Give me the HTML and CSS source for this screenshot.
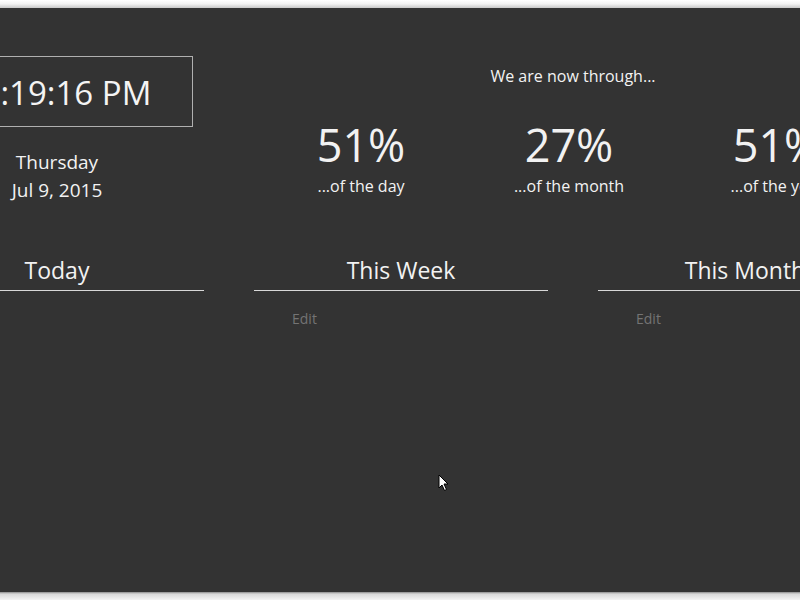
FILE: index.html
```html
<!DOCTYPE html>
<html>
<head>
<meta charset="utf-8">
<link rel="stylesheet" href="styles.css">
</head>
<body>
<div class="frame-top"></div>
<main class="app">
  <div class="content">
    <section class="top-row">
      <div class="clock-col">
        <div class="clock-box"><span class="clock-time">12:19:16 PM</span></div>
        <div class="day">Thursday</div>
        <div class="date">Jul 9, 2015</div>
      </div>
      <div class="progress">
        <div class="progress-title">We are now through...</div>
        <div class="stats">
          <div class="stat"><div class="pct">51%</div><div class="label">...of the day</div></div>
          <div class="stat"><div class="pct">27%</div><div class="label">...of the month</div></div>
          <div class="stat"><div class="pct">51%</div><div class="label">...of the year</div></div>
        </div>
      </div>
    </section>
    <section class="lists">
      <div class="list">
        <h2 class="list-title">Today</h2>
      </div>
      <div class="list">
        <h2 class="list-title">This Week</h2>
        <div class="edit">Edit</div>
      </div>
      <div class="list">
        <h2 class="list-title">This Month</h2>
        <div class="edit">Edit</div>
      </div>
    </section>
  </div>
  <svg class="cursor" width="12" height="18" viewBox="0 0 12 18"><path d="M1 1 L1 14 L4 11 L6.5 16.5 L8.5 15.5 L6 10 L10 10 Z" fill="#fff" stroke="#000" stroke-width="1"/></svg>
</main>
<div class="frame-bottom"></div>
</body>
</html>
```
FILE: styles.css
```css
html, body {
  margin: 0;
  padding: 0;
  width: 800px;
  height: 600px;
  overflow: hidden;
  background: #333333;
  font-family: "Open Sans", "Noto Sans", sans-serif;
  color: #f2f2f2;
}
.frame-top {
  height: 8px;
  background: linear-gradient(#ffffff, #f2f2f2 50%, #c8c8c8);
}
.frame-bottom {
  height: 8px;
  background: linear-gradient(#8a8a8a, #d8d8d8 25%, #f4f4f4);
}
.app {
  position: relative;
  height: 584px;
  background: #333333;
  overflow: hidden;
}
.content {
  margin-left: -90px;
  width: 982px;
}
.top-row {
  display: flex;
  gap: 50px;
}
.clock-col {
  width: 294px;
  display: flex;
  flex-direction: column;
  align-items: center;
  padding-top: 48px;
}
.clock-box {
  width: 270px;
  height: 69px;
  border: 1px solid #b0b0b0;
  display: flex;
  align-items: center;
  justify-content: center;
  box-sizing: content-box;
}
.clock-time {
  font-size: 33px;
  padding-top: 2px;
  color: #f4f4f4;
}
.day, .date {
  font-size: 19px;
  line-height: 28px;
}
.day { margin-top: 21px; }
.progress {
  width: 638px;
  display: flex;
  flex-direction: column;
  align-items: center;
  padding-top: 57px;
}
.progress-title {
  font-size: 16px;
  line-height: 22px;
}
.stats {
  display: grid;
  grid-template-columns: repeat(3, 208px);
  margin-top: 30px;
  margin-left: -8px;
}
.stat {
  text-align: center;
}
.pct {
  font-size: 45px;
  line-height: 56px;
  font-weight: 400;
}
.label {
  font-size: 16px;
  line-height: 22px;
  margin-top: 2px;
}
.lists {
  display: flex;
  gap: 50px;
  margin-top: 51px;
}
.list {
  width: 294px;
}
.list-title {
  margin: 0;
  font-size: 23px;
  font-weight: 400;
  line-height: 30px;
  text-align: center;
  padding-bottom: 5px;
  border-bottom: 1px solid #d8d8d8;
}
.edit {
  margin-top: 18px;
  padding-left: 38px;
  font-size: 14px;
  color: #747474;
}
.cursor {
  position: absolute;
  left: 438px;
  top: 466px;
}
```
